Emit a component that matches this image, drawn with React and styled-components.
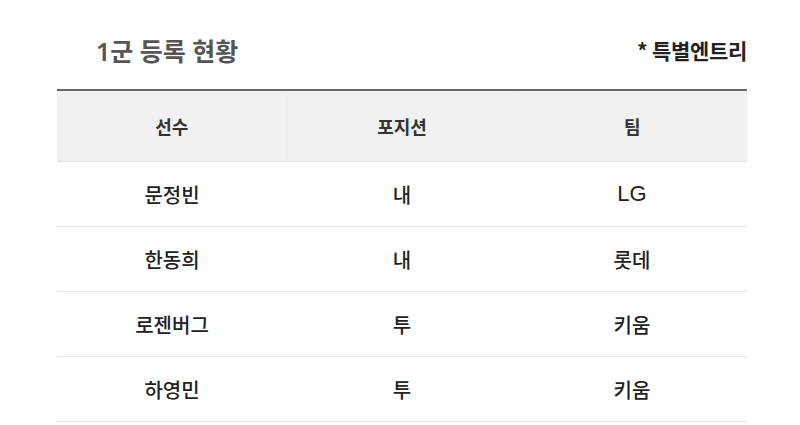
import styled, { createGlobalStyle } from "styled-components";

const players = [
  { name: "문정빈", pos: "내", team: "LG" },
  { name: "한동희", pos: "내", team: "롯데" },
  { name: "로젠버그", pos: "투", team: "키움" },
  { name: "하영민", pos: "투", team: "키움" },
];

const GlobalStyle = createGlobalStyle`
  body {
    margin: 0;
    background: #fff;
    font-family: "Noto Sans CJK KR", "Noto Sans", sans-serif;
  }
`;

const Wrap = styled.div`
  width: 690px;
  margin: 0 auto 0 57px;
  padding-top: 30px;
`;

const Head = styled.div`
  display: flex;
  align-items: center;
  justify-content: space-between;
  height: 40px;
  margin-bottom: 19px;
`;

const Title = styled.h2`
  margin: 0 0 0 39px;
  font-family: "Noto Sans", "Noto Sans CJK KR", sans-serif;
  font-size: 25px;
  font-weight: 600;
  color: #555;
`;

const Note = styled.span`
  font-size: 21px;
  font-weight: 700;
  color: #222;
  letter-spacing: -0.3px;
`;

const Table = styled.table`
  width: 100%;
  border-collapse: collapse;
  table-layout: fixed;
  border-top: 2px solid #666;
`;

const Th = styled.th`
  height: 70px;
  padding: 0;
  background: #f1f1f1;
  border-bottom: 1px solid #e2e2e2;
  border-left: ${(p) => (p.$first ? "none" : "1px solid #eeeeee")};
  font-size: 18px;
  font-weight: 700;
  color: #333;
  text-align: center;
`;

const Td = styled.td`
  height: 64px;
  padding: 0;
  border-bottom: 1px solid #e6e6e6;
  font-size: 20px;
  font-weight: 500;
  color: #222;
  text-align: center;
`;

const TeamCell = styled(Td)`
  font-family: ${(p) => (p.$latin ? '"Liberation Sans", sans-serif' : "inherit")};
  font-weight: ${(p) => (p.$latin ? 400 : 500)};
  font-size: ${(p) => (p.$latin ? "22px" : "20px")};
`;

export default function App() {
  return (
    <>
      <GlobalStyle />
      <Wrap>
        <Head>
          <Title>1군 등록 현황</Title>
          <Note>* 특별엔트리</Note>
        </Head>
        <Table>
          <thead>
            <tr>
              <Th $first>선수</Th>
              <Th>포지션</Th>
              <Th>팀</Th>
            </tr>
          </thead>
          <tbody>
            {players.map((p) => (
              <tr key={p.name}>
                <Td>{p.name}</Td>
                <Td>{p.pos}</Td>
                <TeamCell $latin={/^[A-Z]+$/.test(p.team)}>{p.team}</TeamCell>
              </tr>
            ))}
          </tbody>
        </Table>
      </Wrap>
    </>
  );
}
